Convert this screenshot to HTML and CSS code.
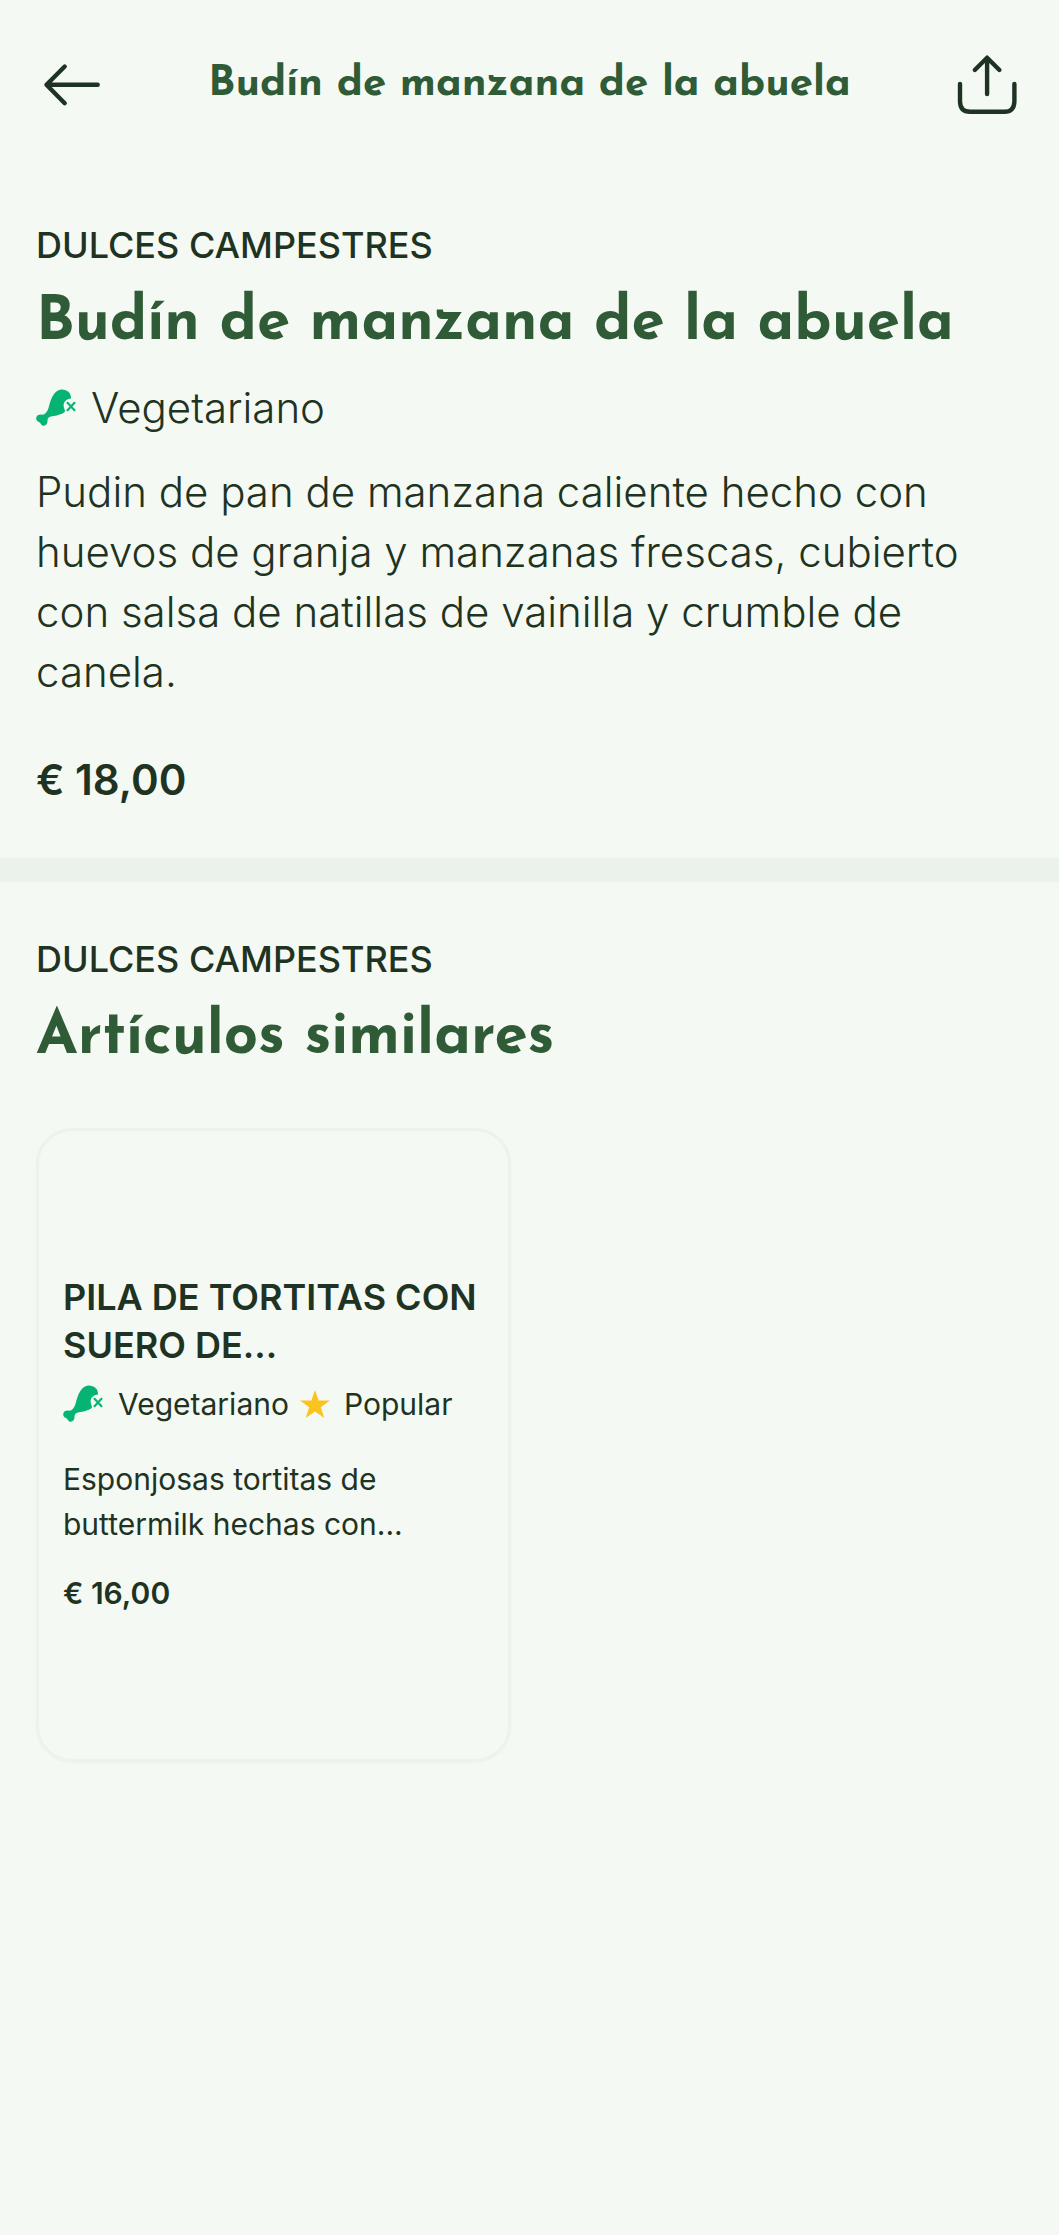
FILE: index.html
```html
<!DOCTYPE html>
<html lang="es">
<head>
<meta charset="utf-8">
<title>Budín de manzana de la abuela</title>
<link rel="stylesheet" href="styles.css">
</head>
<body>
<svg class="sprite" aria-hidden="true">
  <symbol id="meatless" viewBox="0 0 40 37">
    <path fill="#05b373" d="M25 0.5C31 .2 35.500 4 35 9.500C30.500 10 27 13 27.700 17.500C28 19.500 29 21 29 22.500C27 25 21 26.500 15 27.500C12 28 11.500 30 11.500 32.500C11.500 35 9.500 36.800 7.300 36.800C5.500 36.800 5 34.500 3.800 33.500C2.300 32.500 0 32 0.200 29C.5 26.500 3 25.300 6 25.700C9 26 11 23 12.500 19C15 9 18 1.500 25 .5Z"/>
    <path fill="none" stroke="#05b373" stroke-width="2.100" stroke-linecap="round" d="M31.500 13.800l7 7.400m0-7.400l-7 7.400"/>
  </symbol>
</svg>
<header class="topbar">
  <svg class="icon" viewBox="0 0 64 64"><path d="M57.700 32.700H6.500M24.700 14.500L6.500 32.700L24.700 51.200"/></svg>
  <h1 class="topbar-title">Budín de manzana de la abuela</h1>
  <svg class="icon" viewBox="0 0 64 64"><path d="M32.100 42V6M19.800 18L32.100 5.700L44.400 18M5 32V49.500Q5.200 59.800 15 59.800H49.300Q59.200 59.800 59.400 49.500V32"/></svg>
</header>
<main>
  <section class="dish">
    <p class="eyebrow">DULCES CAMPESTRES</p>
    <h2 class="title">Budín de manzana de la abuela</h2>
    <div class="tag"><svg class="meatless"><use href="#meatless"/></svg><span>Vegetariano</span></div>
    <p class="description">Pudin de pan de manzana caliente hecho con huevos de granja y manzanas frescas, cubierto con salsa de natillas de vainilla y crumble de canela.</p>
    <p class="price">€ 18,00</p>
  </section>
  <section class="similar">
    <p class="eyebrow">DULCES CAMPESTRES</p>
    <h2 class="title">Artículos similares</h2>
    <article class="card">
      <h3 class="card-title">PILA DE TORTITAS CON SUERO DE...</h3>
      <div class="card-tags">
        <svg class="meatless"><use href="#meatless"/></svg><span>Vegetariano</span>
        <svg class="star" viewBox="0 0 30 28"><path fill="#fbc31d" d="M15 0l3.600 10.500H30l-9.200 6.700L24.300 28L15 21.400L5.700 28l3.500-10.800L0 10.500h11.400z"/></svg><span>Popular</span>
      </div>
      <p class="card-text">Esponjosas tortitas de buttermilk hechas con...</p>
      <p class="card-price">€ 16,00</p>
    </article>
  </section>
</main>
</body>
</html>
```
FILE: styles.css
```css
* { box-sizing: border-box; margin: 0; padding: 0; }
body {
  background: #f4f9f3;
  color: #1f3322;
  font-family: Inter, "Liberation Sans", sans-serif;
  min-height: 2235px;
}
.sprite { display: none; }
.topbar {
  height: 168px;
  padding: 0 40px;
  display: flex;
  align-items: center;
  justify-content: space-between;
}
.icon {
  width: 64px;
  height: 64px;
  fill: none;
  stroke: currentColor;
  stroke-width: 4.400;
  stroke-linecap: round;
  stroke-linejoin: round;
}
.topbar-title, .title {
  color: #2f5b36;
  font-family: "Josefin Sans", Lato, sans-serif;
  font-weight: 700;
  white-space: nowrap;
}
.topbar-title { font-size: 42px; line-height: 50px; padding-top: 2px; }
.dish {
  height: 714px;
  padding: 53px 36px 0;
  border-bottom: 24px solid #ebf2eb;
}
.eyebrow { font-size: 36px; line-height: 48px; font-weight: 500; white-space: nowrap; }
.title { font-size: 60px; line-height: 72px; margin-top: 19px; }
.tag { display: flex; align-items: center; gap: 15px; margin-top: 18px; font-size: 42px; line-height: 60px; font-weight: 300; }
.meatless { width: 40px; height: 37px; flex: none; margin-bottom: 2px; }
.description { margin-top: 24px; width: 960px; font-size: 42px; line-height: 60px; font-weight: 300; }
.price { margin-top: 48px; font-size: 42px; line-height: 60px; font-weight: 600; }
.similar { padding: 53px 36px 0; }
.card {
  width: 475px;
  height: 634px;
  margin-top: 54px;
  padding: 142px 23px 0 24px;
  border: 3px solid #ecf3ec;
  border-radius: 36px;
  box-shadow: 0 1px 2px #edf3ed;
}
.card-title { font-size: 36px; line-height: 48px; font-weight: 600; }
.card-tags { display: flex; align-items: center; margin-top: 13px; font-size: 30px; line-height: 45px; }
.card-tags span { margin-left: 15px; }
.card-tags .star { width: 30px; height: 28px; margin: 0 -1px 1px 11px; }
.card-text { margin-top: 30px; font-size: 30px; line-height: 45px; }
.card-price { margin-top: 24px; font-size: 30px; line-height: 45px; font-weight: 600; }
```
